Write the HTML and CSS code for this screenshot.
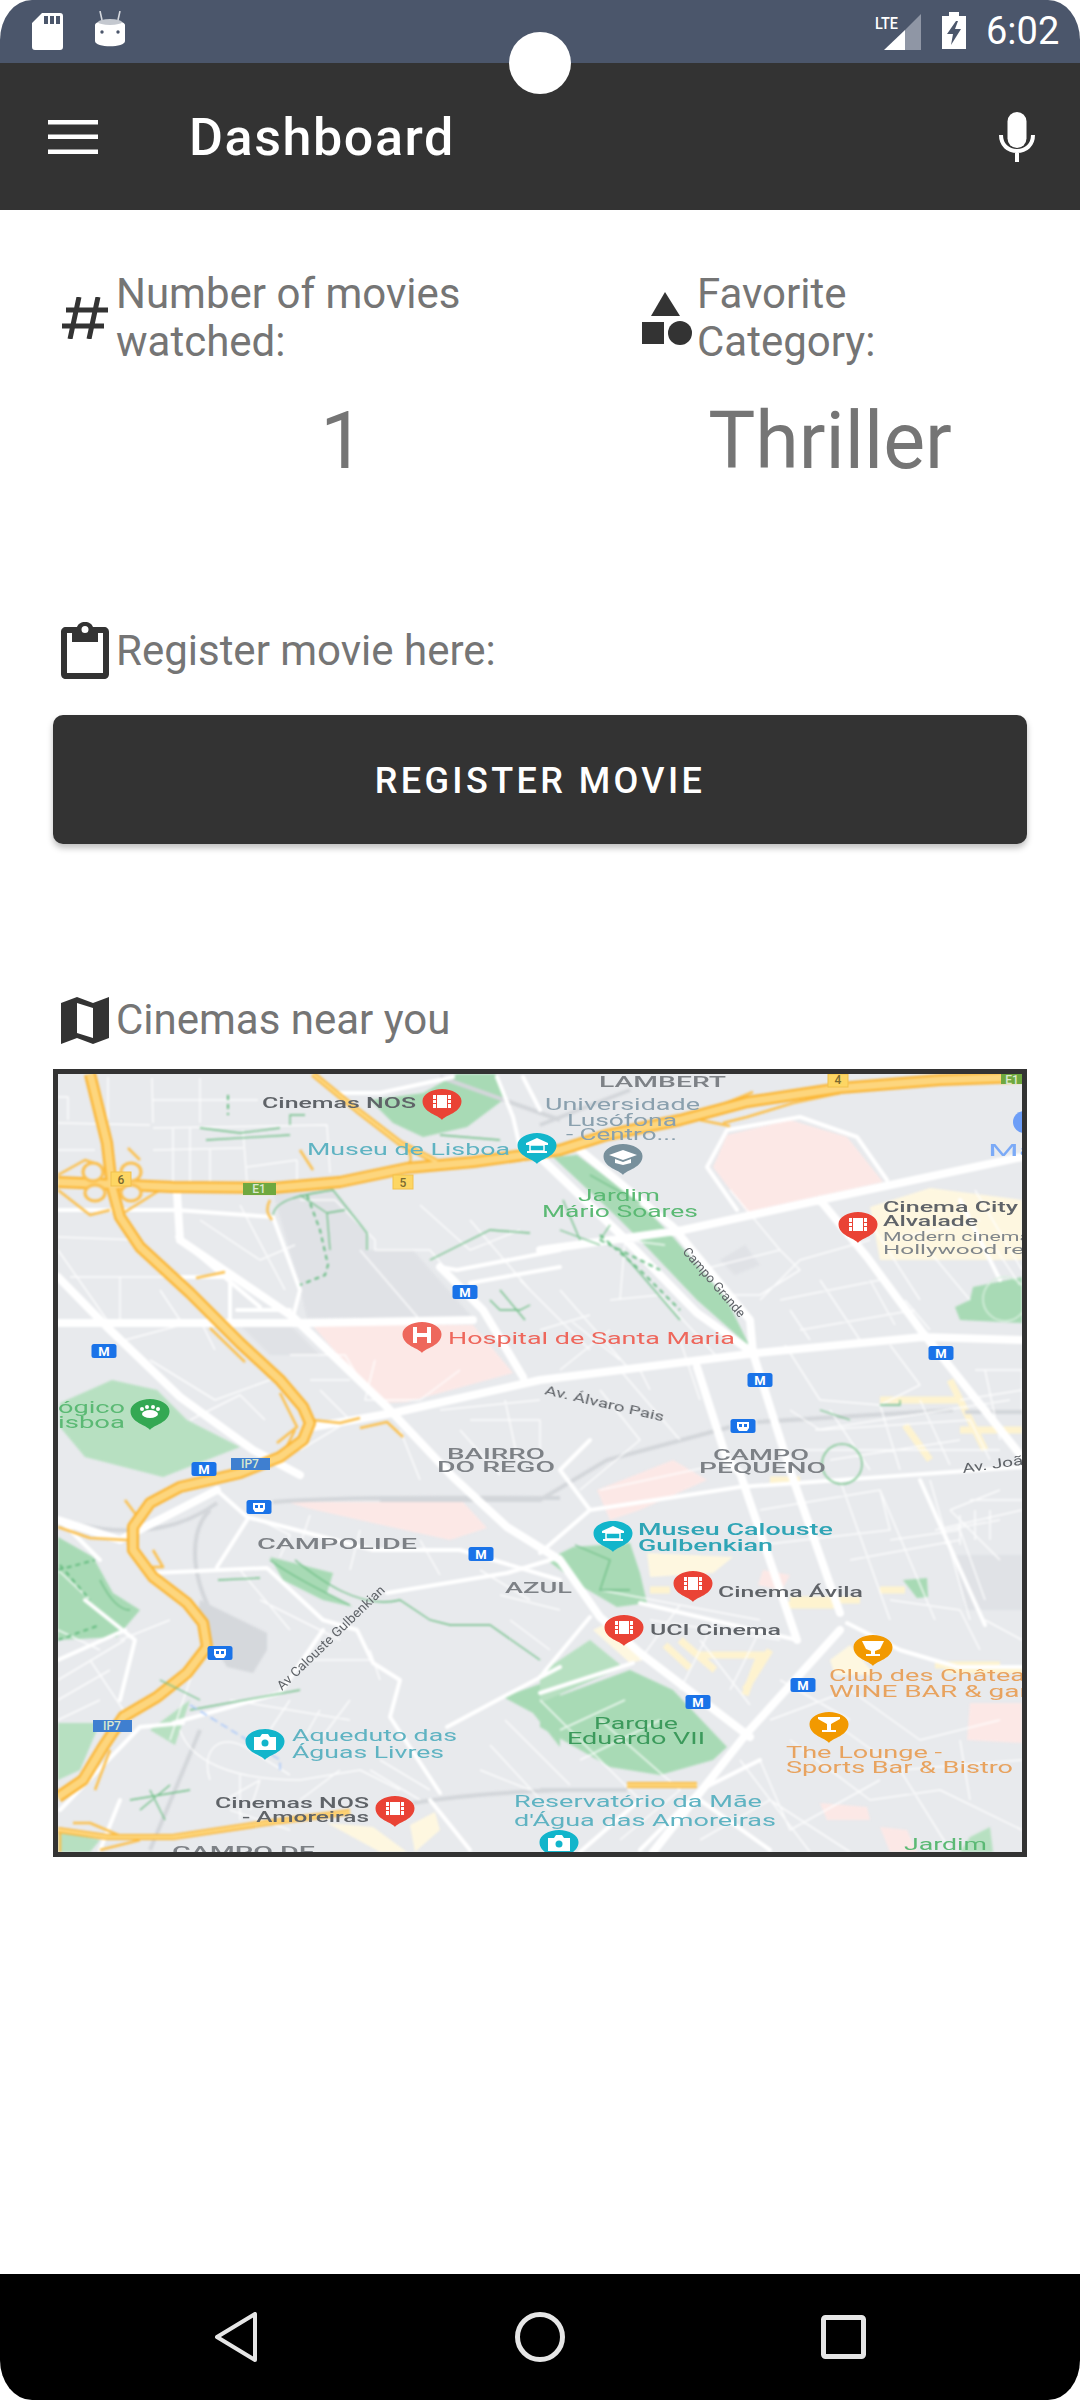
FILE: index.html
```html
<!DOCTYPE html>
<html lang="en">
<head>
    <meta charset="UTF-8">
    <title>Dashboard</title>
    <link rel="stylesheet" href="styles.css">
</head>
<body>
<div class="phone">

    <div class="status-bar">
        <svg class="ic-sd" viewBox="0 0 31 37"><path fill="#fff" fill-rule="evenodd" d="M10 0H28a3 3 0 0 1 3 3V34a3 3 0 0 1-3 3H3a3 3 0 0 1-3-3V10ZM12 3V11H16V3ZM18 3V11H22V3ZM24 3V11H28V3Z"/></svg>
        <svg class="ic-bot" viewBox="0 0 30 36">
            <path stroke="#d5d8de" stroke-width="1.6" d="M5 0L7 9M25 0L23 9"/>
            <path fill="#fff" d="M0 14C0 8 30 8 30 14V30C30 37 0 37 0 30Z"/>
            <ellipse cx="15" cy="11" rx="12" ry="3" fill="#c4c8cf"/>
            <circle cx="7" cy="21" r="1.7" fill="#4b566b"/><circle cx="23" cy="21" r="1.7" fill="#4b566b"/>
        </svg>
        <div class="status-right">
            <svg class="ic-signal" viewBox="0 0 46 37">
                <path fill="#8f96a5" d="M46 1V37H30V17Z"/>
                <path fill="#fff" d="M30 17V37H9Z"/>
                <text class="lte" x="0" y="16" textLength="23" lengthAdjust="spacingAndGlyphs">LTE</text>
            </svg>
            <svg class="ic-battery" viewBox="0 0 24 37">
                <path fill="#fff" fill-rule="evenodd" d="M7 0H17V4H24V37H0V4H7ZM14 9L5 22H11L9 33L19 17H13L16 9Z"/>
            </svg>
            <span class="clock">6:02</span>
        </div>
    </div>

    <div class="camera"></div>

    <header class="app-bar">
        <svg class="ic-menu" viewBox="0 0 50 34"><path fill="#fff" d="M0 0H50V4.500H0ZM0 14.500H50V19H0ZM0 29.500H50V34H0Z"/></svg>
        <div class="app-title">Dashboard</div>
        <svg class="ic-mic" viewBox="0 0 36 50">
            <rect x="8.500" y="0" width="19" height="36" rx="9.500" fill="#fff"/>
            <path fill="none" stroke="#fff" stroke-width="4" d="M2 23C2 33 9 39 18 39S34 33 34 23M18 38V50"/>
        </svg>
    </header>

    <main class="content">
        <section class="stats">
            <div class="stat stat-first">
                <div class="label-row">
                    <svg class="ic-hash" viewBox="0 0 48 42"><path fill="none" stroke="#333" stroke-width="5" d="M18 0L9 42M37 0L28 42M5 13H47M1 29H43"/></svg>
                    <div class="label">Number of movies<br>watched:</div>
                </div>
                <div class="value">1</div>
            </div>
            <div class="stat stat-second">
                <div class="label-row">
                    <svg class="ic-shapes" viewBox="0 0 50 53">
                        <path fill="#333" d="M23 0L38 24H9Z"/>
                        <rect x="0" y="30" width="22" height="22" fill="#333"/>
                        <circle cx="38" cy="41" r="12" fill="#333"/>
                    </svg>
                    <div class="label">Favorite<br>Category:</div>
                </div>
                <div class="value">Thriller</div>
            </div>
        </section>

        <div class="label-row row-register">
            <svg class="ic-clip" viewBox="0 0 48 57">
                <path fill="#333" fill-rule="evenodd" d="M5 5H16C17 2 20 0 24 0S31 2 32 5H43C46 5 48 7 48 10V52C48 55 46 57 43 57H5C2 57 0 55 0 52V10C0 7 2 5 5 5ZM6 11V51H42V11H37V20H11V11ZM24 4A3 3 0 0 0 24 11A3 3 0 0 0 24 4Z"/>
            </svg>
            <div class="label">Register movie here:</div>
        </div>
        <button class="btn">REGISTER MOVIE</button>

        <div class="label-row row-cinemas">
            <svg class="ic-map" viewBox="0 0 48 47">
                <path fill="#333" fill-rule="evenodd" d="M0 6L16 0L32 6L48 0V41L32 47L16 41L0 47ZM16 6V36L32 41V11Z"/>
            </svg>
            <div class="label">Cinemas near you</div>
        </div>

        <div class="map">
            <svg class="map-svg" viewBox="58 1074 964 778">
                <defs>
                    <path id="pin" d="M0 18C-3 13-19.500 11-19.500-1C-19.500-8-10-13 0-13S19.500-8 19.500-1C19.500 11 3 13 0 18Z"/>
                    <g id="film">
                        <rect x="-9" y="-7" width="18" height="13" fill="#fff"/>
                        <path fill="#ea4335" d="M-6-7H-5V6H-6ZM5-7H6V6H5ZM-9-3H-6V-2H-9ZM-9 1H-6V2H-9ZM6-3H9V-2H6ZM6 1H9V2H6Z"/>
                    </g>
                    <g id="museum">
                        <path fill="#fff" d="M0-8L11-3V-1H-11V-3ZM-10 5H10V7H-10Z"/>
                        <rect x="-7" y="-1" width="14" height="6" fill="none" stroke="#fff" stroke-width="1.500"/>
                    </g>
                    <g id="camera">
                        <path fill="#fff" d="M-11-5H-5L-3-8H3L5-5H11V8H-11Z"/>
                        <circle cx="0" cy="1" r="3.500" fill="#12b5cb"/>
                    </g>
                    <g id="metro">
                        <rect x="-12.500" y="-7" width="25" height="14" rx="2.500" fill="#1a73e8"/>
                        <text class="mk-text" x="0" y="4.500">M</text>
                    </g>
                    <g id="train">
                        <rect x="-12.500" y="-7" width="25" height="14" rx="2.500" fill="#1a73e8"/>
                        <path fill="#fff" d="M-6-4H6V2L4 5H-4L-6 2ZM-4-2V1H-1V-2ZM1-2V1H4V-2Z"/>
                    </g>
                </defs>

                <rect x="58" y="1074" width="964" height="778" fill="#e8eaed"/>

                <g class="map-base">
                    <!-- darker blocks -->
                    <path class="block" d="M273 1193L333 1190L367 1233V1250H413L473 1318H307L297 1277Z"/>
                    <path class="block" d="M720 1260L745 1245L760 1265L735 1275Z"/>
                    <path class="block" d="M955 1555H1022V1610H965Z"/>
                    <path class="block" d="M240 1325H290L320 1355H270Z"/>

                    <!-- parks -->
                    <path class="park" d="M457 1074H495L507 1097L467 1127L423 1137L393 1123L370 1100L423 1093Z"/>
                    <path class="park-light" d="M112 1380L157 1390L187 1420L240 1447L163 1477L85 1457L60 1427V1403Z"/>
                    <path class="park" d="M58 1537L93 1557L113 1593L140 1610L117 1637L58 1640Z"/>
                    <path class="park" d="M270 1557L333 1573L327 1593L353 1607L323 1600L283 1580Z"/>
                    <path class="park-light" d="M58 1723H100L80 1770L58 1780Z"/>
                    <path class="park-light" d="M58 1830L100 1840L90 1852H58Z"/>
                    <path class="park-light" d="M150 1730L190 1700L175 1745Z"/>
                    <path class="park" d="M547 1560L573 1547L630 1543L640 1573L647 1603L617 1607L583 1587Z"/>
                    <path class="park" d="M553 1157L577 1155L640 1203L673 1237L727 1300L750 1347L697 1300L640 1240L617 1217Z"/>
                    <path class="park" d="M540 1703L630 1670L673 1690L727 1747L713 1760L660 1775L610 1767L540 1727Z"/>
                    <path class="park" d="M503 1697L560 1677V1747L533 1713Z"/>
                    <path class="park-light" d="M540 1673L590 1640L623 1667L540 1703Z"/>
                    <path class="park" d="M973 1287L1022 1277V1323L960 1320L955 1307L970 1300Z"/>
                    <path class="park-light" d="M970 1837L990 1827L993 1852H960Z"/>
                    <path class="park" d="M903 1580L927 1578L928 1597L917 1598Z"/>

                    <!-- pink and cream areas -->
                    <path class="pink" d="M312 1325H473L513 1373L407 1402L380 1403Z"/>
                    <path class="pink" d="M713 1167L727 1135L790 1120L847 1137L883 1182L747 1212Z"/>
                    <path class="pink" d="M287 1502H463L487 1528L450 1540L373 1523L307 1508Z"/>
                    <path class="pink" d="M597 1490L630 1477L673 1460L707 1480L640 1510L610 1520Z"/>
                    <path class="pink" d="M970 1703H1022V1743L967 1740Z"/>
                    <path class="pink" d="M763 1570L790 1575L782 1590L758 1585Z"/>
                    <path class="pink" d="M820 1803L867 1807L870 1820L827 1820Z"/>
                    <path class="pink" d="M880 1827L907 1830L917 1852H890Z"/>
                    <path class="cream" d="M870 1207L930 1188L1022 1200V1260L880 1260Z"/>
                    <path class="cream" d="M647 1553L733 1557L713 1573L650 1577Z"/>
                    <path class="cream" d="M593 1630L607 1623L643 1660L630 1663Z"/>
                    <path class="cream" d="M327 1823L373 1827L407 1852H380Z"/>
                    <path class="cream" d="M410 1825L435 1812L440 1830L415 1852Z"/>
                    <path class="cream" d="M830 1660L850 1645L875 1675H835Z"/>
                    <path class="cream-line" d="M665 1645L690 1668M680 1640L715 1670M700 1655H760L745 1695M790 1600H860M785 1605H835M650 1590H670M905 1590H880M945 1670H1022M935 1665H1000M770 1650L745 1690M950 1380L985 1450M960 1430H1022M880 1400H960M905 1425L930 1460M770 1480H800"/>

                    <!-- rail -->
                    <path class="rail" d="M273 1502C350 1496 470 1498 560 1498M757 1422L953 1410M730 1427L607 1460L540 1500L380 1500M540 1790H627M413 1803C460 1795 510 1792 560 1790M217 1503C180 1530 130 1540 60 1520M210 1510C190 1530 190 1570 210 1610M440 1077L560 1120M540 1125L630 1090M965 1412H1022M200 1730L150 1850"/>
                    <path class="rail-yard" d="M200 1600L267 1633V1650L253 1673L227 1667L197 1620Z"/>

                    <!-- thin streets -->
                    <path class="street" d="M58 1097H68V1120M58 1123L150 1125M108 1077V1120M152 1078L153 1123M153 1128L327 1125L330 1173M173 1128V1183M243 1130L247 1183M153 1150L243 1148M297 1160V1180M247 1167L297 1160M58 1150H95M200 1078V1123M153 1100H258M190 1128V1183M210 1150V1185
                    M58 1237L137 1240M70 1277H180M120 1277V1320M160 1290L180 1320M58 1250L107 1320M200 1220L260 1260L295 1245M240 1205L285 1290M300 1200H335L375 1240V1250H430L480 1310M420 1205L470 1250L520 1230M470 1220L530 1290M540 1250L600 1240M520 1280L590 1350M560 1290L630 1370M360 1250L420 1320
                    M125 1340L200 1320L215 1350M150 1360L215 1400L270 1380M190 1420L240 1395L265 1420M320 1390L350 1420L300 1450M350 1420L390 1412M290 1355H345L360 1380M310 1380H350M375 1360L365 1400L420 1400L460 1370M400 1430L420 1480M440 1410L540 1400M470 1420H540V1470M505 1400L520 1470M460 1430L500 1475
                    M600 1390L640 1440L580 1490M620 1370L680 1440M640 1370L650 1390M680 1340L700 1400M610 1300L660 1295L720 1360M570 1320L620 1360M560 1370L610 1330M540 1330L590 1315M620 1300L625 1240L665 1245
                    M700 1270L780 1250L800 1270L760 1295L730 1295M760 1300L800 1260L870 1240M780 1250L730 1190M800 1330L915 1310M780 1300L880 1280M820 1280L860 1340M790 1310L810 1340M870 1280L895 1325M905 1300L930 1330M890 1240L980 1220M920 1240L970 1300M990 1240L1020 1285M975 1190L1022 1270M875 1230L920 1300
                    M785 1345L820 1400L880 1405L920 1385L890 1345M830 1410L870 1470M880 1405L900 1470M920 1400L950 1465M975 1370H1022V1410M960 1400L1022 1390M985 1370L1000 1440M815 1430L1010 1400M790 1410L820 1430L970 1420L990 1460M800 1450H1000M830 1460L960 1440
                    M600 1490L740 1460M760 1510L880 1490L890 1530L760 1545M840 1480L890 1620M880 1490L935 1620M930 1480L970 1620M935 1530L1022 1510M890 1540L960 1530L985 1600M850 1560L960 1540M890 1600L960 1610M985 1620L1022 1640M960 1610L980 1650
                    M1000 1490L950 1510M970 1500H1022M945 1530L1000 1520M950 1510L1000 1560M990 1510V1540M975 1510V1540M960 1515V1545
                    M600 1590L760 1620M680 1605L640 1660M650 1620L780 1640M715 1620L680 1690M760 1630L730 1690M700 1640L750 1705M770 1720L850 1690L920 1740L1000 1720M830 1720L900 1770L1022 1760M760 1760L790 1830L880 1780M790 1740L870 1800L940 1790L1022 1830M900 1770L950 1850M960 1740L970 1800M780 1680L850 1720M740 1760L810 1852M700 1840L770 1800L850 1852
                    M540 1700L640 1800M560 1730L625 1700M580 1760L660 1720M600 1720L680 1790L620 1840M505 1720L570 1785M490 1745L550 1810M480 1770L530 1790
                    M58 1570L90 1600M58 1630L100 1650M58 1680L125 1640M90 1660L130 1720M58 1700L110 1670M58 1720L100 1700M120 1640L170 1620M200 1650L170 1740
                    M230 1700L350 1720M290 1700L270 1730M320 1710L300 1745M350 1700L320 1740M180 1730C190 1760 230 1780 300 1780M210 1780C200 1750 220 1730 250 1750L290 1775M240 1775V1820M260 1780L250 1810M300 1780L360 1770L400 1790M340 1770L300 1800M225 1800L260 1780M370 1770L420 1800M230 1810L290 1830
                    M380 1760L430 1790M260 1600L340 1640M300 1660H370M370 1650L380 1680M240 1570L290 1630M260 1520L290 1535L280 1557M310 1515L300 1545M360 1530L350 1570M420 1540L440 1575M480 1570L530 1600M500 1595L560 1610M510 1620L550 1650"/>

                    <!-- medium streets -->
                    <path class="road-mid" d="M337 1093H380L453 1077M497 1077L513 1117L523 1160M523 1077L540 1110M273 1217L300 1290L293 1317M177 1237L260 1307M230 1273V1320M237 1310H290M180 1277H237M560 1250L457 1270L440 1267M470 1283L560 1267
                    M58 1210H177L273 1217M737 1210L707 1167L727 1130L800 1117L857 1137L887 1180M590 1510L560 1470L590 1440M247 1520L217 1567M220 1493L247 1517L373 1550L460 1550L560 1580M153 1573L267 1568L323 1620L357 1630L373 1663L400 1680L390 1717L440 1793M173 1723L280 1693L323 1630M387 1593L507 1573L560 1557M447 1727L503 1697L560 1667M60 1810L140 1727L183 1723M640 1603L797 1640M847 1623L900 1650L957 1667H1022M540 1553L590 1510L740 1487L1022 1467M540 1677L590 1617M540 1693L633 1663M960 1200L1000 1280M920 1480L985 1625M100 1560L60 1520M85 1600L135 1640L120 1700M58 1660L125 1630M640 1850L700 1790L760 1760M430 1800L470 1850M700 1800L770 1850M580 1852L640 1800M100 1850L120 1800"/>

                    <!-- main streets -->
                    <path class="road" d="M58 1323H307L473 1320M58 1277L107 1327L180 1397L253 1450L300 1475M180 1240L293 1317L387 1407L437 1460L453 1477L507 1527L560 1560L600 1617L640 1653L750 1737M440 1267L483 1310L523 1377M393 1413L540 1380L757 1353L923 1337L1022 1340M540 1250L683 1230L820 1200L1022 1157M543 1160L623 1237L697 1313L753 1353L790 1470L840 1613M580 1150L673 1227L750 1320L753 1353M820 1200L867 1257L923 1333L1022 1457M697 1367L727 1460L740 1473L797 1640M840 1630L747 1733L653 1852M177 1193L180 1240M313 1427L393 1413M58 1520L120 1540L217 1490"/>

                    <!-- ramps, drawn under the highways -->
                    <path class="hw-ramp" d="M58 1175L85 1160L100 1165M58 1190L90 1215L110 1210M125 1212L160 1190L190 1188M140 1160L128 1148M313 1170L300 1150M225 1272L196 1278M210 1328L245 1362M280 1393L297 1427L277 1443M313 1420L340 1423L360 1418M360 1428L387 1422L403 1437M295 1430L285 1450
                    M680 1122L753 1092M723 1123L747 1117L793 1103L840 1093M700 1120L730 1126M407 1168C412 1160 412 1155 407 1150M270 1200C265 1210 268 1215 272 1220
                    M58 1527L90 1538L127 1540M127 1543L150 1567L163 1567L153 1550M140 1520L125 1500M73 1823L90 1823L123 1837M60 1830V1852M100 1850L140 1840M110 1750L95 1790"/>

                    <!-- highways -->
                    <path class="hw-edge" d="M90 1074L107 1143L112 1187L120 1217L140 1247L190 1293L240 1343L280 1380L303 1407L310 1423L303 1440L280 1457L240 1473L180 1487L150 1503L133 1527L133 1550L153 1577L187 1603L203 1623L207 1647L187 1673L157 1697L123 1717L103 1747L83 1780L58 1797"/>
                    <path class="hw-edge" d="M58 1182L173 1187L273 1188L340 1182L407 1168L473 1162L560 1150L607 1135L680 1120L747 1102L840 1088L940 1080L1022 1077"/>
                    <path class="hw-edge-thin" d="M58 1830L107 1837L173 1837L273 1822L350 1812M313 1074L357 1110L400 1143L437 1162M627 1785H697"/>
                    <path class="hw" d="M90 1074L107 1143L112 1187L120 1217L140 1247L190 1293L240 1343L280 1380L303 1407L310 1423L303 1440L280 1457L240 1473L180 1487L150 1503L133 1527L133 1550L153 1577L187 1603L203 1623L207 1647L187 1673L157 1697L123 1717L103 1747L83 1780L58 1797"/>
                    <path class="hw" d="M58 1182L173 1187L273 1188L340 1182L407 1168L473 1162L560 1150L607 1135L680 1120L747 1102L840 1088L940 1080L1022 1077"/>
                    <path class="hw-thin" d="M58 1830L107 1837L173 1837L273 1822L350 1812M313 1074L357 1110L400 1143L437 1162M627 1785H697"/>
                    <ellipse class="loop" cx="93" cy="1172" rx="10" ry="9"/>
                    <ellipse class="loop" cx="95" cy="1193" rx="10" ry="8"/>
                    <ellipse class="loop" cx="131" cy="1172" rx="10" ry="9"/>
                    <ellipse class="loop" cx="131" cy="1193" rx="10" ry="8"/>
                    <circle class="green-ring" cx="842" cy="1464" r="20"/>
                    <circle class="white-ring" cx="1005" cy="1299" r="22"/>

                    <!-- footpaths -->
                    <path class="path" d="M273 1215C275 1200 300 1195 333 1190L367 1233V1250M300 1195L327 1213L330 1250M327 1213L345 1210M200 1128L240 1133L280 1128M206 1140L290 1135M290 1125V1115H305M440 1135L500 1140M563 1200L580 1240M430 1260L490 1230L530 1233M590 1175L640 1203M560 1230L600 1245M490 1300L500 1310H520L530 1305M500 1290L525 1320M610 1225L600 1240M620 1250L680 1320M900 1400L900 1405H880M820 1410L850 1420M270 1560C290 1575 320 1590 350 1605M295 1560C320 1580 360 1610 400 1600L430 1620L450 1625L490 1625L540 1660M218 1580L260 1578M575 1545L610 1560L600 1590L630 1590M100 1580C110 1600 120 1610 130 1610M160 1680L200 1700M190 1710L300 1690M130 1800L190 1790M140 1810L170 1785M165 1820L150 1790"/>
                    <path class="path-dash" d="M228 1095V1115M307 1195L320 1230L328 1265L325 1275L300 1285M600 1235L640 1270L680 1310M58 1570L95 1560M58 1640L100 1625M60 1565L90 1600M600 1240L660 1270"/>
                    <path class="water-line" d="M190 1705L280 1760V1770"/>
                </g>

                <!-- highway shields -->
                <rect class="shield-y" x="111" y="1172" width="20" height="14"/><text class="sh-text sh-dark" x="121" y="1184">6</text>
                <rect class="shield-y" x="393" y="1175" width="20" height="14"/><text class="sh-text sh-dark" x="403" y="1187">5</text>
                <rect class="shield-y" x="828" y="1074" width="20" height="13"/><text class="sh-text sh-dark" x="838" y="1084">4</text>
                <rect class="shield-g" x="243" y="1183" width="33" height="12"/><text class="sh-text" x="259" y="1193">E1</text>
                <rect class="shield-g" x="1001" y="1074" width="21" height="10"/><text class="sh-text" x="1012" y="1084">E1</text>
                <rect class="shield-b" x="231" y="1458" width="39" height="12"/><text class="sh-text" x="250" y="1468">IP7</text>
                <rect class="shield-b" x="93" y="1720" width="39" height="12"/><text class="sh-text" x="112" y="1730">IP7</text>

                <use href="#metro" x="104" y="1351"/>
                <use href="#metro" x="465" y="1292"/>
                <use href="#metro" x="204" y="1469"/>
                <use href="#metro" x="760" y="1380"/>
                <use href="#metro" x="941" y="1353"/>
                <use href="#metro" x="481" y="1554"/>
                <use href="#metro" x="698" y="1702"/>
                <use href="#metro" x="803" y="1685"/>
                <use href="#train" x="743" y="1426"/>
                <use href="#train" x="259" y="1507"/>
                <use href="#train" x="220" y="1653"/>

                <circle cx="1024" cy="1122" r="11" fill="#6d9ef7"/>

                <!-- pins -->
                <g transform="translate(442 1102)"><use href="#pin" class="pin-red"/><use href="#film"/></g>
                <g transform="translate(858 1225)"><use href="#pin" class="pin-red"/><use href="#film"/></g>
                <g transform="translate(693 1584)"><use href="#pin" class="pin-red"/><use href="#film"/></g>
                <g transform="translate(624 1628)"><use href="#pin" class="pin-red"/><use href="#film"/></g>
                <g transform="translate(395 1809)"><use href="#pin" class="pin-red"/><use href="#film"/></g>
                <g transform="translate(537 1146)"><use href="#pin" class="pin-teal"/><use href="#museum"/></g>
                <g transform="translate(613 1534)"><use href="#pin" class="pin-teal"/><use href="#museum"/></g>
                <g transform="translate(265 1742)"><use href="#pin" class="pin-teal"/><use href="#camera"/></g>
                <g transform="translate(559 1843)"><use href="#pin" class="pin-teal"/><use href="#camera"/></g>
                <g transform="translate(422 1335)"><use href="#pin" class="pin-hosp"/><path fill="#fff" d="M-9-8H-5V-2H5V-8H9V8H5V2H-5V8H-9Z"/></g>
                <g transform="translate(150 1412)">
                    <use href="#pin" class="pin-green"/>
                    <ellipse cx="0" cy="2" rx="8" ry="4" fill="#fff"/>
                    <circle cx="-8" cy="-3" r="2" fill="#fff"/><circle cx="-3" cy="-5" r="2" fill="#fff"/><circle cx="3" cy="-5" r="2" fill="#fff"/><circle cx="8" cy="-3" r="2" fill="#fff"/>
                </g>
                <g transform="translate(623 1157)">
                    <use href="#pin" class="pin-grey"/>
                    <path fill="#fff" d="M0-7L14-2L0 3L-14-2ZM-8 2L0 5L8 2V6L0 8L-8 6Z"/>
                </g>
                <g transform="translate(873 1648)">
                    <use href="#pin" class="pin-orange"/>
                    <path fill="#fff" d="M-11-7H11L7 1L2 3V6H7V8H-7V6H-2V3L-7 1Z"/>
                </g>
                <g transform="translate(829 1725)">
                    <use href="#pin" class="pin-orange"/>
                    <path fill="#fff" d="M-11-8H11V-6L2-1V5H7V7H-7V5H-2V-1L-11-6Z"/>
                </g>

                <!-- labels -->
                <g class="map-labels">
                <text class="lbl-area t-grey t14" x="599" y="1087" textLength="127" lengthAdjust="spacingAndGlyphs">LAMBERT</text>
                <text class="lbl t-slate t17" x="545" y="1110" textLength="155" lengthAdjust="spacingAndGlyphs">Universidade</text>
                <text class="lbl t-slate t17" x="567" y="1126" textLength="110" lengthAdjust="spacingAndGlyphs">Lusófona</text>
                <text class="lbl t-slate t17" x="566" y="1140" textLength="111" lengthAdjust="spacingAndGlyphs">- Centro...</text>
                <text class="lbl-b t-dark t15" x="262" y="1108" textLength="154" lengthAdjust="spacingAndGlyphs">Cinemas NOS</text>
                <text class="lbl t-teal t17" x="307" y="1155" textLength="203" lengthAdjust="spacingAndGlyphs">Museu de Lisboa</text>
                <text class="lbl t-green t17" x="578" y="1201" textLength="82" lengthAdjust="spacingAndGlyphs">Jardim</text>
                <text class="lbl t-green t17" x="542" y="1217" textLength="156" lengthAdjust="spacingAndGlyphs">Mário Soares</text>
                <text class="lbl t-dark t11" transform="translate(682 1252) rotate(49)" textLength="88" lengthAdjust="spacingAndGlyphs">Campo Grande</text>
                <text class="lbl-b t-dark t15" x="883" y="1212" textLength="135" lengthAdjust="spacingAndGlyphs">Cinema City</text>
                <text class="lbl-b t-dark t15" x="883" y="1226" textLength="95" lengthAdjust="spacingAndGlyphs">Alvalade</text>
                <text class="lbl t-dim t13" x="883" y="1241" textLength="148" lengthAdjust="spacingAndGlyphs">Modern cinema</text>
                <text class="lbl t-dim t13" x="883" y="1254" textLength="160" lengthAdjust="spacingAndGlyphs">Hollywood rele</text>
                <text class="lbl t-blue t17" x="988" y="1156" textLength="50" lengthAdjust="spacingAndGlyphs">Ma</text>
                <text class="lbl t-red t17" x="448" y="1344" textLength="287" lengthAdjust="spacingAndGlyphs">Hospital de Santa Maria</text>
                <text class="lbl t-dark t11" transform="translate(544 1394) rotate(13)" textLength="122" lengthAdjust="spacingAndGlyphs">Av. Álvaro Pais</text>
                <text class="lbl-area t-grey t14" x="447" y="1459" textLength="98" lengthAdjust="spacingAndGlyphs">BAIRRO</text>
                <text class="lbl-area t-grey t14" x="437" y="1472" textLength="118" lengthAdjust="spacingAndGlyphs">DO REGO</text>
                <text class="lbl-area t-grey t14" x="713" y="1460" textLength="96" lengthAdjust="spacingAndGlyphs">CAMPO</text>
                <text class="lbl-area t-grey t14" x="699" y="1473" textLength="127" lengthAdjust="spacingAndGlyphs">PEQUENO</text>
                <text class="lbl t-dark t11" transform="translate(963 1473) rotate(-8)" textLength="72" lengthAdjust="spacingAndGlyphs">Av. João</text>
                <text class="lbl t-green t17" x="58" y="1413" textLength="67" lengthAdjust="spacingAndGlyphs">ógico</text>
                <text class="lbl t-green t17" x="58" y="1428" textLength="67" lengthAdjust="spacingAndGlyphs">isboa</text>
                <text class="lbl-area t-grey t14" x="257" y="1549" textLength="160" lengthAdjust="spacingAndGlyphs">CAMPOLIDE</text>
                <text class="lbl-area t-grey t14" x="505" y="1593" textLength="67" lengthAdjust="spacingAndGlyphs">AZUL</text>
                <text class="lbl t-dark t11" transform="translate(282 1691) rotate(-44)" textLength="144" lengthAdjust="spacingAndGlyphs">Av Calouste Gulbenkian</text>
                <text class="lbl-b t-teal2 t17" x="638" y="1535" textLength="195" lengthAdjust="spacingAndGlyphs">Museu Calouste</text>
                <text class="lbl-b t-teal2 t17" x="638" y="1551" textLength="135" lengthAdjust="spacingAndGlyphs">Gulbenkian</text>
                <text class="lbl-b t-dark t15" x="718" y="1597" textLength="145" lengthAdjust="spacingAndGlyphs">Cinema Ávila</text>
                <text class="lbl-b t-dark t15" x="650" y="1635" textLength="131" lengthAdjust="spacingAndGlyphs">UCI Cinema</text>
                <text class="lbl t-orange t17" x="829" y="1681" textLength="196" lengthAdjust="spacingAndGlyphs">Club des Châtea</text>
                <text class="lbl t-orange t17" x="829" y="1697" textLength="200" lengthAdjust="spacingAndGlyphs">WINE BAR &amp; gar</text>
                <text class="lbl t-orange t17" x="786" y="1758" textLength="156" lengthAdjust="spacingAndGlyphs">The Lounge -</text>
                <text class="lbl t-orange t17" x="786" y="1773" textLength="227" lengthAdjust="spacingAndGlyphs">Sports Bar &amp; Bistro</text>
                <text class="lbl t-dgreen t17" x="594" y="1729" textLength="84" lengthAdjust="spacingAndGlyphs">Parque</text>
                <text class="lbl t-dgreen t17" x="567" y="1744" textLength="138" lengthAdjust="spacingAndGlyphs">Eduardo VII</text>
                <text class="lbl t-teal t17" x="292" y="1741" textLength="165" lengthAdjust="spacingAndGlyphs">Aqueduto das</text>
                <text class="lbl t-teal t17" x="292" y="1758" textLength="152" lengthAdjust="spacingAndGlyphs">Águas Livres</text>
                <text class="lbl t-teal t17" x="514" y="1807" textLength="248" lengthAdjust="spacingAndGlyphs">Reservatório da Mãe</text>
                <text class="lbl t-teal t17" x="514" y="1826" textLength="262" lengthAdjust="spacingAndGlyphs">d'Água das Amoreiras</text>
                <text class="lbl-b t-dark t15" x="215" y="1808" textLength="154" lengthAdjust="spacingAndGlyphs">Cinemas NOS</text>
                <text class="lbl-b t-dark t15" x="242" y="1822" textLength="127" lengthAdjust="spacingAndGlyphs">- Amoreiras</text>
                <text class="lbl-area t-grey t14" x="172" y="1857" textLength="143" lengthAdjust="spacingAndGlyphs">CAMPO DE</text>
                <text class="lbl t-green t17" x="904" y="1850" textLength="83" lengthAdjust="spacingAndGlyphs">Jardim</text>
                </g>
            </svg>
        </div>
    </main>

    <nav class="nav-bar">
        <svg class="ic-back" viewBox="0 0 42 50"><path fill="none" stroke="#e6e6e6" stroke-width="4" stroke-linejoin="round" d="M40 2V48L2 25Z"/></svg>
        <svg class="ic-home" viewBox="0 0 50 50"><circle cx="25" cy="25" r="22.500" fill="none" stroke="#e6e6e6" stroke-width="5"/></svg>
        <svg class="ic-recent" viewBox="0 0 45 44"><rect x="2.500" y="2.500" width="40" height="39" rx="2" fill="none" stroke="#e6e6e6" stroke-width="5"/></svg>
    </nav>
</div>
</body>
</html>
```

FILE: styles.css
```css
body {
    margin: 0;
    background-color: #fff;
    font-family: Roboto, "Noto Sans", sans-serif;
}
.phone {
    position: relative;
    width: 1080px;
    height: 2400px;
    display: flex;
    flex-direction: column;
    overflow: hidden;
    border-radius: 32px 32px 32px 32px / 40px 40px 40px 40px;
    background-color: #fff;
}

/* status bar */
.status-bar {
    height: 63px;
    flex: none;
    display: flex;
    align-items: flex-start;
    padding: 0 24px 0 32px;
    box-sizing: border-box;
    background-color: #4b566b;
}
.ic-sd {
    width: 31px;
    height: 37px;
    margin-top: 13px;
}
.ic-bot {
    width: 30px;
    height: 36px;
    margin: 11px 0 0 32px;
}
.status-right {
    margin-left: auto;
    display: flex;
    align-items: flex-start;
}
.ic-signal {
    width: 46px;
    height: 37px;
    margin-top: 13px;
}
.ic-battery {
    width: 24px;
    height: 37px;
    margin: 12px 0 0 21px;
}
.clock {
    margin-left: 20px;
    color: #fff;
    font-size: 38px;
    line-height: 63px;
    width: 70px;
    white-space: nowrap;
}
.lte {
    fill: #fff;
    font-size: 17px;
    font-weight: 500;
}
.camera {
    position: absolute;
    left: 509px;
    top: 32px;
    width: 62px;
    height: 62px;
    border-radius: 50%;
    background-color: #fff;
}

/* app bar */
.app-bar {
    height: 147px;
    flex: none;
    display: flex;
    align-items: center;
    padding: 0 45px 0 48px;
    box-sizing: border-box;
    background-color: #333;
}
.ic-menu {
    width: 50px;
    height: 34px;
}
.app-title {
    margin: 2px 0 0 91px;
    color: #fff;
    font-size: 52px;
    font-weight: 500;
    letter-spacing: 1.6px;
}
.ic-mic {
    margin-left: auto;
    width: 36px;
    height: 50px;
}

/* content */
.content {
    flex: 1;
    padding: 60px 53px 0;
}
.stats {
    display: grid;
    grid-template-columns: 554px 1fr;
    padding: 0 9px 0 8px;
}
.stat-first .value {
    padding-left: 9px;
}
.stat-second {
    padding-left: 27px;
}
.label-row {
    display: flex;
    align-items: center;
}
.label {
    margin-left: 7px;
    color: #757575;
    font-size: 42px;
    line-height: 48px;
}
.stat-second .label {
    margin-left: 5px;
}
.value {
    margin-top: 28px;
    color: #757575;
    font-size: 79px;
    line-height: 94px;
    text-align: center;
}
.ic-hash {
    width: 48px;
    height: 42px;
}
.ic-shapes {
    width: 50px;
    height: 53px;
}
.ic-clip {
    width: 48px;
    height: 57px;
}
.ic-map {
    width: 48px;
    height: 47px;
}
.row-register {
    margin: 134px 0 36px 8px;
}
.row-cinemas {
    margin: 152px 0 25px 8px;
}
.btn {
    display: block;
    width: 100%;
    height: 129px;
    padding-top: 3px;
    border: none;
    border-radius: 10px;
    background-color: #333;
    color: #fff;
    font-family: Roboto, sans-serif;
    font-size: 36px;
    font-weight: 500;
    letter-spacing: 3.4px;
    box-shadow: 0 4px 6px rgba(0, 0, 0, 0.25);
}

/* map */
.map {
    border: 5px solid #333;
    width: 964px;
    height: 778px;
}
.map-svg {
    display: block;
    width: 964px;
    height: 778px;
}
.map-base {
    filter: blur(0.8px);
}
.map-labels {
    filter: blur(0.4px);
}
.block { fill: #e0e2e6; }
.park { fill: #a8dab5; }
.park-light { fill: #b7e0c1; }
.pink { fill: #fce8e6; }
.cream { fill: #fef7e0; }
.cream-line { fill: none; stroke: #fef3cf; stroke-width: 7; }
.rail { fill: none; stroke: #d3d6da; stroke-width: 4; }
.rail-yard { fill: #d5d8dc; }
.street { fill: none; stroke: #fff; stroke-width: 1.5; stroke-linejoin: round; opacity: 0.85; }
.road-mid { fill: none; stroke: #fff; stroke-width: 4; stroke-linejoin: round; stroke-linecap: round; }
.road { fill: none; stroke: #fff; stroke-width: 8; stroke-linejoin: round; stroke-linecap: round; }
.hw-edge { fill: none; stroke: #fbb32e; stroke-width: 12; stroke-linejoin: round; }
.hw { fill: none; stroke: #fdd67e; stroke-width: 7.5; stroke-linejoin: round; }
.hw-edge-thin { fill: none; stroke: #fbb32e; stroke-width: 6; stroke-linejoin: round; }
.hw-thin { fill: none; stroke: #fdd67e; stroke-width: 3.5; stroke-linejoin: round; }
.hw-ramp { fill: none; stroke: #fbc04f; stroke-width: 2.5; stroke-linejoin: round; }
.loop { fill: #e8eaed; stroke: #fbbf4d; stroke-width: 3; }
.green-ring { fill: none; stroke: #7cc690; stroke-width: 1.5; }
.white-ring { fill: none; stroke: #d9f0df; stroke-width: 1.5; }
.path { fill: none; stroke: #6fbf86; stroke-width: 1.3; }
.path-dash { fill: none; stroke: #5bb878; stroke-width: 1.8; stroke-dasharray: 5 4; }
.water-line { fill: none; stroke: #a8c7fa; stroke-width: 1.5; stroke-dasharray: 8 4; }

.shield-y { fill: #fdd663; stroke: #f2c14e; }
.shield-g { fill: #6fa83f; }
.shield-b { fill: #3f7fd0; }
.sh-text {
    fill: #dbe8cf;
    font-size: 12px;
    font-weight: 500;
    text-anchor: middle;
}
.sh-dark { fill: #7a6a30; }
.mk-text {
    fill: #fff;
    font-size: 13px;
    font-weight: 700;
    text-anchor: middle;
}
.pin-red { fill: #ea4335; }
.pin-teal { fill: #12b5cb; }
.pin-hosp { fill: #ee675c; }
.pin-green { fill: #34a853; }
.pin-grey { fill: #78909c; }
.pin-orange { fill: #f29900; }

.lbl, .lbl-b, .lbl-area {
    font-family: Roboto, sans-serif;
}
.lbl-b { font-weight: 500; }
.lbl-area { font-weight: 500; }
.t11 { font-size: 13px; }
.t13 { font-size: 13px; }
.t14 { font-size: 14px; }
.t15 { font-size: 15px; }
.t17 { font-size: 17px; }
.t-grey { fill: #7d8186; }
.t-dark { fill: #5f6368; }
.t-dim { fill: #80868b; }
.t-slate { fill: #8aa0ae; }
.t-teal { fill: #5fb3c2; }
.t-teal2 { fill: #30a5b6; }
.t-green { fill: #5bb974; }
.t-dgreen { fill: #3c9a5c; }
.t-blue { fill: #7baaf7; }
.t-red { fill: #ee675c; }
.t-orange { fill: #e8a35f; }

/* bottom nav */
.nav-bar {
    height: 126px;
    flex: none;
    display: flex;
    align-items: center;
    background-color: #000;
}
.ic-back {
    width: 42px;
    height: 50px;
    margin-left: 215px;
}
.ic-home {
    width: 50px;
    height: 50px;
    margin-left: 258px;
}
.ic-recent {
    width: 45px;
    height: 44px;
    margin-left: 256px;
}
```
